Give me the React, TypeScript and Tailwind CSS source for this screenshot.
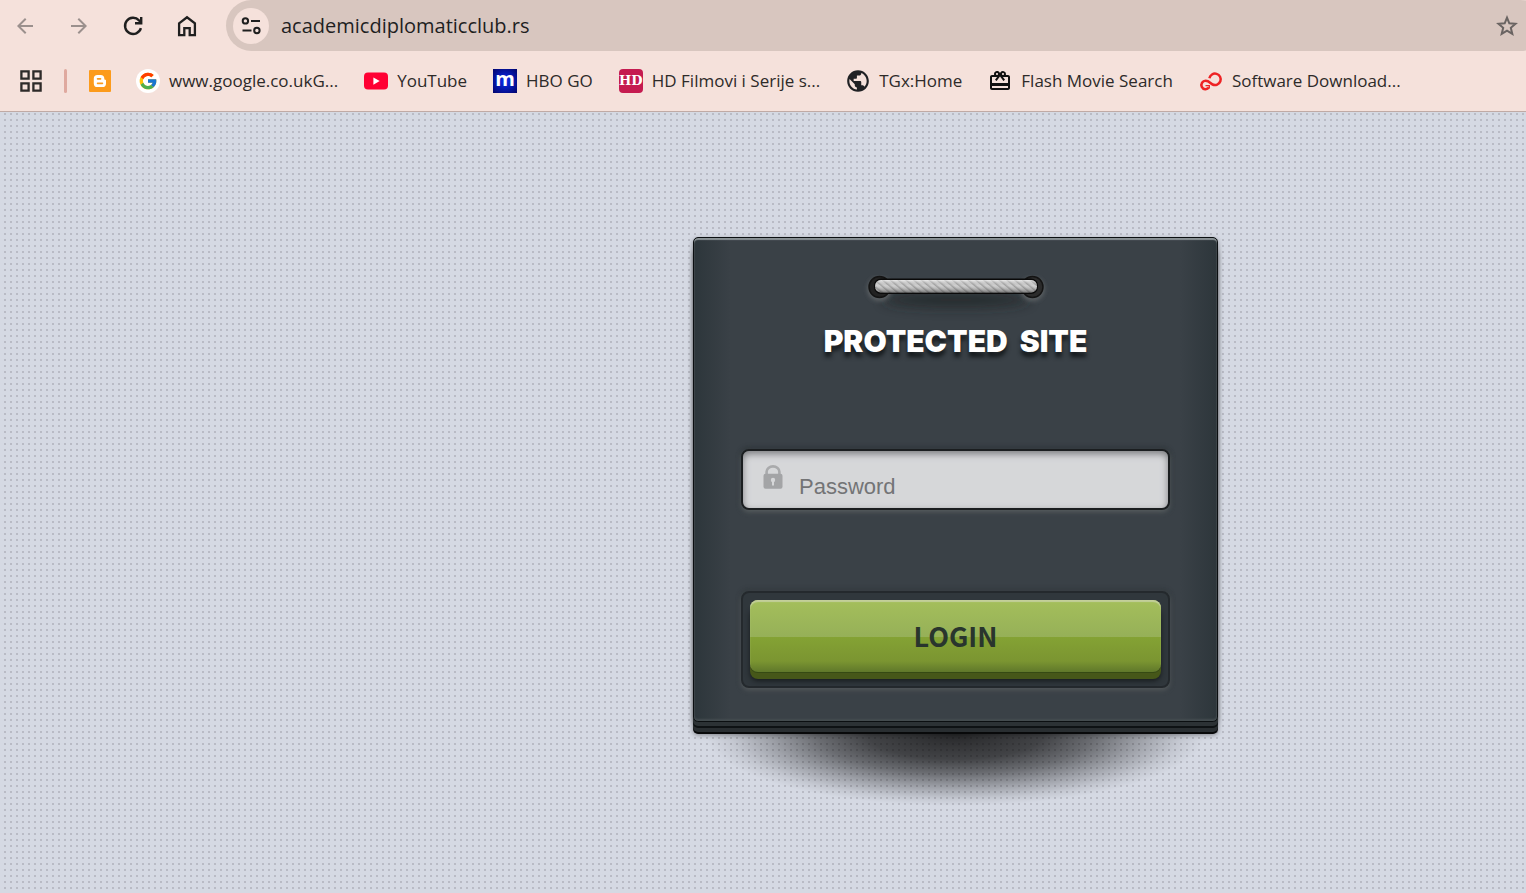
import { ReactNode } from "react";
import { FcGoogle } from "react-icons/fc";
import { MdArrowBack, MdArrowForward, MdCardGiftcard, MdPublic } from "react-icons/md";

interface Bookmark {
  label: string;
  icon: ReactNode;
}

const ReloadIcon = () => (
  <svg className="w-6 h-6" viewBox="0 0 24 24" fill="none" stroke="currentColor" strokeWidth="2.4">
    <path d="M19.9 14.2A8.100 8.100 0 1 1 18 6.300l2.200 2.200" />
    <path d="M20.200 3v6.200h-6.200" />
  </svg>
);

const HomeIcon = () => (
  <svg className="w-6 h-6" viewBox="0 0 24 24" fill="none" stroke="currentColor" strokeWidth="2.3">
    <path d="M4.1 9.4 12 3.3l7.900 6.100v11.800h-5.200v-7H9.300v7H4.100z" />
  </svg>
);

const SiteSettingsIcon = () => (
  <svg className="w-6 h-6" viewBox="0 0 24 24" fill="none" stroke="currentColor" strokeWidth="2">
    <circle cx="6.4" cy="6.900" r="2.700" />
    <path d="M12 6.900h9M3.500 16.500h9" />
    <circle cx="17.900" cy="16.500" r="2.700" />
  </svg>
);

const StarIcon = () => (
  <svg className="w-6 h-6" viewBox="0 0 24 24" fill="none" stroke="currentColor" strokeWidth="2">
    <path d="m12 3.600 2.300 5.700 6.200.5-4.700 4 1.500 6.100-5.300-3.300-5.300 3.300 1.500-6.100-4.700-4 6.200-.5z" />
  </svg>
);

const AppsIcon = () => (
  <svg className="w-6 h-6" viewBox="0 0 24 24" fill="none" stroke="currentColor" strokeWidth="2.3">
    <path d="M2.400 2.400h7.200v7.200H2.400zM14.400 2.400h7.200v7.200h-7.200zM2.400 14.400h7.200v7.200H2.400zM14.400 14.400h7.200v7.200h-7.200z" />
  </svg>
);

const BloggerIcon = () => (
  <svg className="w-[22px] h-[22px]" viewBox="0 0 22 22">
    <rect width="22" height="22" rx="1" fill="#fc9b1c" />
    <path
      fill="#fff"
      fillRule="evenodd"
      d="M8.4 5h3.3a3.600 3.600 0 0 1 3.600 3.500c0 .9.3 1.200 1.100 1.300.4 0 .6.3.6.7v2.900a3.600 3.600 0 0 1-3.600 3.600h-5a3.600 3.600 0 0 1-3.600-3.600V8.600A3.600 3.600 0 0 1 8.400 5zm.2 3a.8.8 0 0 0 0 1.700h2.900a.8.8 0 0 0 0-1.700zm0 4.500a.8.8 0 0 0 0 1.700h4.800a.8.8 0 0 0 0-1.700z"
    />
  </svg>
);

const YouTubeIcon = () => (
  <svg className="w-6 h-6" viewBox="0 0 24 24">
    <rect y="3.600" width="24" height="17" rx="4" fill="#ff0033" />
    <path d="m9.400 8.500 6.300 3.600-6.300 3.600z" fill="#fff" />
  </svg>
);

const LoopIcon = () => (
  <svg className="w-6 h-6" viewBox="0 0 24 24" fill="none" stroke="#ee2224" strokeWidth="2.5">
    <path d="M10.400 9.200a5.700 5.700 0 1 1 3.200 6.300C11.300 14.400 10.200 11.800 6.600 11.800a4.200 4.200 0 1 0 3.300 6.800" />
    <path d="M6.500 16.600h3.800v2.600" strokeWidth="1.300" />
  </svg>
);

const LockIcon = () => (
  <svg className="w-5 h-6 shrink-0" viewBox="0 0 20 24">
    <path d="M3.600 11V6.800a6.400 5.400 0 0 1 12.800 0V11" fill="none" stroke="#a9aaac" strokeWidth="2.600" />
    <rect x=".5" y="8.800" width="19" height="15" rx="2" fill="#a3a4a6" />
    <circle cx="10" cy="15" r="2.200" fill="#d6d7d9" />
    <path d="M9 16h2v4.500H9z" fill="#d6d7d9" />
  </svg>
);

const HandleIcon = () => (
  <svg className="w-[192px] h-12" viewBox="0 0 192 48">
    <defs>
      <pattern id="rope" width="5" height="5" patternUnits="userSpaceOnUse" patternTransform="rotate(-50)">
        <rect width="5" height="5" fill="#cfcfcf" />
        <rect width="1.500" height="5" fill="#a2a2a2" />
      </pattern>
      <linearGradient id="ropeShade" x1="0" y1="0" x2="0" y2="1">
        <stop offset="0" stopColor="#fff" stopOpacity=".6" />
        <stop offset=".45" stopColor="#888" stopOpacity="0" />
        <stop offset="1" stopColor="#222" stopOpacity=".5" />
      </linearGradient>
      <filter id="ropeBlur" x="-20%" y="-100%" width="140%" height="300%">
        <feGaussianBlur stdDeviation="6" />
      </filter>
      <filter id="holeBlur" x="-50%" y="-50%" width="200%" height="200%">
        <feGaussianBlur stdDeviation="2" />
      </filter>
    </defs>
    <ellipse cx="96" cy="25" rx="74" ry="8" fill="#1a2023" opacity=".6" filter="url(#ropeBlur)" />
    <circle cx="19.500" cy="14" r="12" fill="#5d6265" filter="url(#holeBlur)" />
    <circle cx="172.500" cy="14" r="12" fill="#5d6265" filter="url(#holeBlur)" />
    <circle cx="19.500" cy="12" r="10.500" fill="#222" stroke="#141414" strokeWidth="1.500" />
    <circle cx="172.500" cy="12" r="10.500" fill="#2b2b2b" stroke="#141414" strokeWidth="1.500" />
    <rect x="14" y="3.500" width="164" height="15.500" rx="7" fill="#0a0a0a" />
    <rect x="15" y="5" width="162" height="12.500" rx="6" fill="url(#rope)" />
    <rect x="15" y="5" width="162" height="12.500" rx="6" fill="url(#ropeShade)" />
  </svg>
);

const bookmarks: Bookmark[] = [
  {
    label: "www.google.co.ukG...",
    icon: (
      <span className="flex w-6 h-6 items-center justify-center rounded-full bg-white">
        <FcGoogle className="w-5 h-5" />
      </span>
    ),
  },
  { label: "YouTube", icon: <YouTubeIcon /> },
  {
    label: "HBO GO",
    icon: (
      <span className="flex w-6 h-6 items-center justify-center bg-[radial-gradient(circle,#0a2cf0,#02046a)] font-['Open_Sans',sans-serif] text-xl leading-5 font-bold text-white pb-1">
        m
      </span>
    ),
  },
  {
    label: "HD Filmovi i Serije s...",
    icon: (
      <span className="flex w-6 h-6 items-center justify-center rounded-sm bg-[#c51b50] font-['DejaVu_Serif',serif] text-[13px] font-bold text-white">
        HD
      </span>
    ),
  },
  { label: "TGx:Home", icon: <MdPublic className="w-[26px] h-[26px] -mx-px text-[#202124]" /> },
  { label: "Flash Movie Search", icon: <MdCardGiftcard className="w-6 h-6 text-[#111]" /> },
  { label: "Software Download...", icon: <LoopIcon /> },
];

const AddressBar = () => {
  return (
    <div className="flex items-center h-[51px] pl-[13px] text-[#1f1f1f]">
      <div className="flex items-center gap-[30px] mr-[27px]">
        <button type="button" aria-label="Back" className="text-[#9b908d]">
          <MdArrowBack className="w-6 h-6" />
        </button>
        <button type="button" aria-label="Forward" className="text-[#9b908d]">
          <MdArrowForward className="w-6 h-6" />
        </button>
        <button type="button" aria-label="Reload">
          <ReloadIcon />
        </button>
        <button type="button" aria-label="Home">
          <HomeIcon />
        </button>
      </div>
      <div className="flex grow items-center h-full -mr-5 pl-[7px] pr-[27px] rounded-full bg-[#d8c6bf]">
        <button type="button" aria-label="Site settings" className="flex w-9 h-9 items-center justify-center rounded-full bg-[#f5e1db]">
          <SiteSettingsIcon />
        </button>
        <input
          type="text"
          aria-label="Address"
          defaultValue="academicdiplomaticclub.rs"
          className="grow min-w-0 ml-3 bg-transparent text-xl outline-none"
        />
        <button type="button" aria-label="Bookmark" className="text-[#6a6462]">
          <StarIcon />
        </button>
      </div>
    </div>
  );
};

const BookmarksBar = () => {
  return (
    <nav className="flex items-center h-[60px] pl-[19px] whitespace-nowrap text-[17px] text-[#2d2a29]">
      <button type="button" aria-label="Apps">
        <AppsIcon />
      </button>
      <span className="w-[3px] h-6 ml-[21px] mr-[22px] rounded-sm bg-[#dfa99f]" />
      <a href="#" aria-label="Blogger">
        <BloggerIcon />
      </a>
      <div className="flex items-center gap-[26px] ml-[25px]">
        {bookmarks.map((bookmark) => (
          <a key={bookmark.label} href="#" className="flex items-center gap-[9px]">
            {bookmark.icon}
            {bookmark.label}
          </a>
        ))}
      </div>
    </nav>
  );
};

const LoginCard = () => {
  return (
    <div className="w-[525px] mt-[125px] mr-[308px] ml-auto">
      <form
        onSubmit={(e) => e.preventDefault()}
        className="flex flex-col items-center h-[485px] px-[47px] pt-[37px] rounded-[5px] border border-[#0b0f11] bg-[linear-gradient(90deg,#2d363b,#3a4147_7%,#3a4147_93%,#2d363b)] shadow-[inset_0_2px_1px_#8b9396,inset_0_-2px_2px_#444c50,0_4px_0_#2c3235,0_6px_0_#0e1214,0_10px_0_#292e31,0_12px_0_#08090a,0_13px_5px_#0006,0_2px_5px_#0006]"
      >
        <HandleIcon />
        <h1 className="font-[Inter,sans-serif] text-[30px] leading-9 font-black whitespace-pre text-white [text-shadow:0_5px_4px_#14191c]">
          PROTECTED  SITE
        </h1>
        <label className="flex items-start w-full h-[61px] mt-[90px] pt-[14px] pl-5 rounded-lg border-2 border-[#1b1e20] bg-[#d6d7d9] shadow-[inset_0_3px_7px_#7c7d80,0_2px_5px_#5a6062,0_-1px_5px_#272d31]">
          <LockIcon />
          <input
            type="password"
            placeholder="Password"
            aria-label="Password"
            className="grow min-w-0 mt-[6px] ml-4 bg-transparent font-['Liberation_Sans',sans-serif] text-[22px] leading-8 text-[#444] placeholder:text-[#737476] outline-none"
          />
        </label>
        <div className="w-full mt-[81px] p-[7px] rounded-lg border-2 border-[#24292d] bg-[#30373c] shadow-[0_2px_5px_#565b5d,0_-1px_5px_#2c3337]">
          <button
            type="submit"
            className="block w-full h-[72px] mb-[7px] rounded-lg bg-[linear-gradient(#a4bf5b,#96b058_51%,#84a234_52%,#7b9531_85%,#60782b)] shadow-[inset_0_2px_1px_#c3cf9a,0_1px_0_#364a13,0_7px_0_#465719,0_9px_5px_#171c1e] font-['Noto_Sans_CJK_SC',sans-serif] text-[27px] font-bold text-[#29352d]"
          >
            LOGIN
          </button>
        </div>
      </form>
      <div className="h-24 mt-3 bg-[radial-gradient(250px_72px_at_50%_0,#000000d0,#000000b0_35%,#00000080_55%,#00000040_75%,#00000014_90%,transparent)]" />
    </div>
  );
};

const App = () => {
  return (
    <div className="flex flex-col min-h-screen overflow-hidden font-['Open_Sans','Noto_Sans',sans-serif]">
      <header className="border-b border-[#c0aaa5] bg-[#f5e1db]">
        <AddressBar />
        <BookmarksBar />
      </header>
      <main className="grow bg-[#d5d9e3] bg-[radial-gradient(circle_at_5px_2px,#b9bbc5_1px,transparent_1px)] bg-size-[6px_6px]">
        <LoginCard />
      </main>
    </div>
  );
};

export default App;
